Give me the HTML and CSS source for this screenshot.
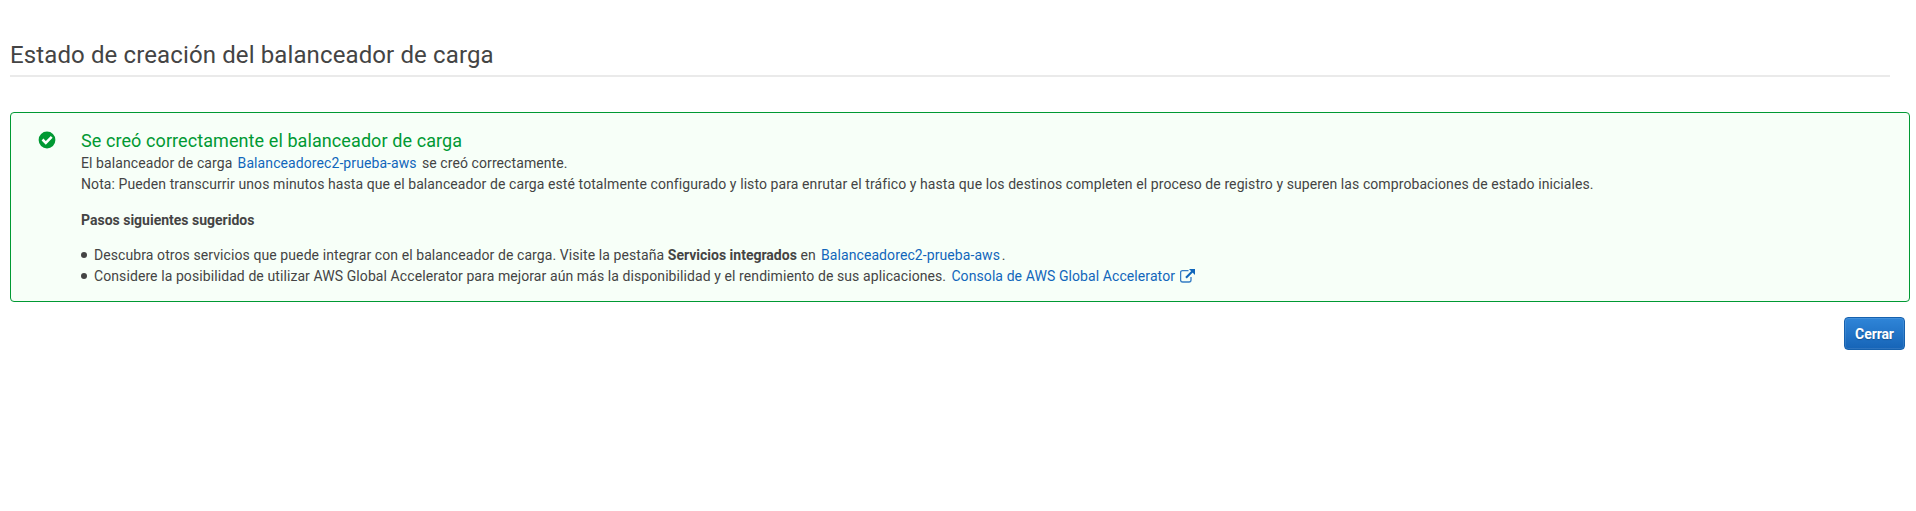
FILE: index.html
```html
<!DOCTYPE html>
<html lang="es">
<head>
<meta charset="utf-8">
<title>Estado de creación del balanceador de carga</title>
<link rel="stylesheet" href="styles.css">
</head>
<body>
<main class="page">
<h1 class="title">Estado de creación del balanceador de carga</h1>
<section class="alert">
<svg class="check" viewBox="0 0 18 18"><circle cx="9" cy="9" r="8.4" fill="#093"/><path d="M4.500 8.500l3.300 3.300 5.900-5.900" fill="none" stroke="#fff" stroke-width="2.600"/></svg>
<div class="body">
<h2 class="heading">Se creó correctamente el balanceador de carga</h2>
<p class="line created">El balanceador de carga <a class="link">Balanceadorec2-prueba-aws</a> se creó correctamente.</p>
<p class="line note">Nota: Pueden transcurrir unos minutos hasta que el balanceador de carga esté totalmente configurado y listo para enrutar el tráfico y hasta que los destinos completen el proceso de registro y superen las comprobaciones de estado iniciales.</p>
<h3 class="steps">Pasos siguientes sugeridos</h3>
<ul class="list">
<li class="item"><span>Descubra otros servicios que puede integrar con el balanceador de carga. Visite la pestaña <b class="strong">Servicios integrados</b> en <a class="link">Balanceadorec2-prueba-aws</a>.</span></li>
<li class="item"><span>Considere la posibilidad de utilizar AWS Global Accelerator para mejorar aún más la disponibilidad y el rendimiento de sus aplicaciones. <a class="link">Consola de AWS Global Accelerator</a></span><svg class="external" viewBox="0 0 15 14"><path d="M8.500 1.600H2.600Q.6 1.600.6 3.600V11q0 2 2 2H9q2 0 2-2V8" fill="none" stroke="#357cc4" stroke-width="1.300"/><path d="M6 8.800l6.500-6.500" fill="none" stroke="#16b" stroke-width="2.200"/><path d="M9 0H15v6z" fill="#16b"/></svg></li>
</ul>
</div>
</section>
<div class="actions"><button class="close">Cerrar</button></div>
</main>
</body>
</html>
```
FILE: styles.css
```css
* { box-sizing: border-box; }
body { margin: 0; background: #fff; color: #444; font: 14px/21px Roboto, sans-serif; letter-spacing: 0.087px; }
.page { padding: 38px 6px 0 10px; }
.title { margin: 0 20px 35px 0; height: 39px; border-bottom: 2px solid #eaeaea; font-size: 24px; font-weight: 400; line-height: 34px; letter-spacing: 0.12px; }
.alert { display: flex; height: 190px; padding: 17px 27px; border: 1px solid #093; border-radius: 4px; background: #f7fff8; }
.check { width: 18px; height: 18px; margin-top: 1px; flex: none; }
.body { margin-left: 25px; white-space: nowrap; }
.heading { margin: 0 0 1px; font-size: 18px; font-weight: 400; line-height: 22px; color: #093; }
.line { margin: 0; }
.link { margin: 0 1.7px; color: #16b; }
.strong { letter-spacing: 0; }
.steps { margin: 15px 0 14px; font-size: 14px; font-weight: 700; line-height: 21px; letter-spacing: 0; }
.list { margin: 0; padding: 0; list-style: none; }
.item { display: flex; align-items: center; }
.item::before { content: ""; width: 6px; height: 6px; margin: -2px 7px 0 0; border-radius: 50%; background: #444; }
.external { width: 15px; height: 14px; margin: 0 0 1px 3px; }
.actions { display: flex; justify-content: flex-end; padding: 15px 5px 0 0; }
.close { width: 61px; height: 33px; padding: 0; border: 1px solid #1661ae; border-radius: 4px; background: linear-gradient(#2f85d8, #1664b7); box-shadow: inset 0 0 0 1px rgba(255, 255, 255, 0.1); color: #fff; font: 700 14px Roboto, sans-serif; text-shadow: 0 1px 1px rgba(0, 0, 0, 0.25); letter-spacing: -0.1px; }
```
